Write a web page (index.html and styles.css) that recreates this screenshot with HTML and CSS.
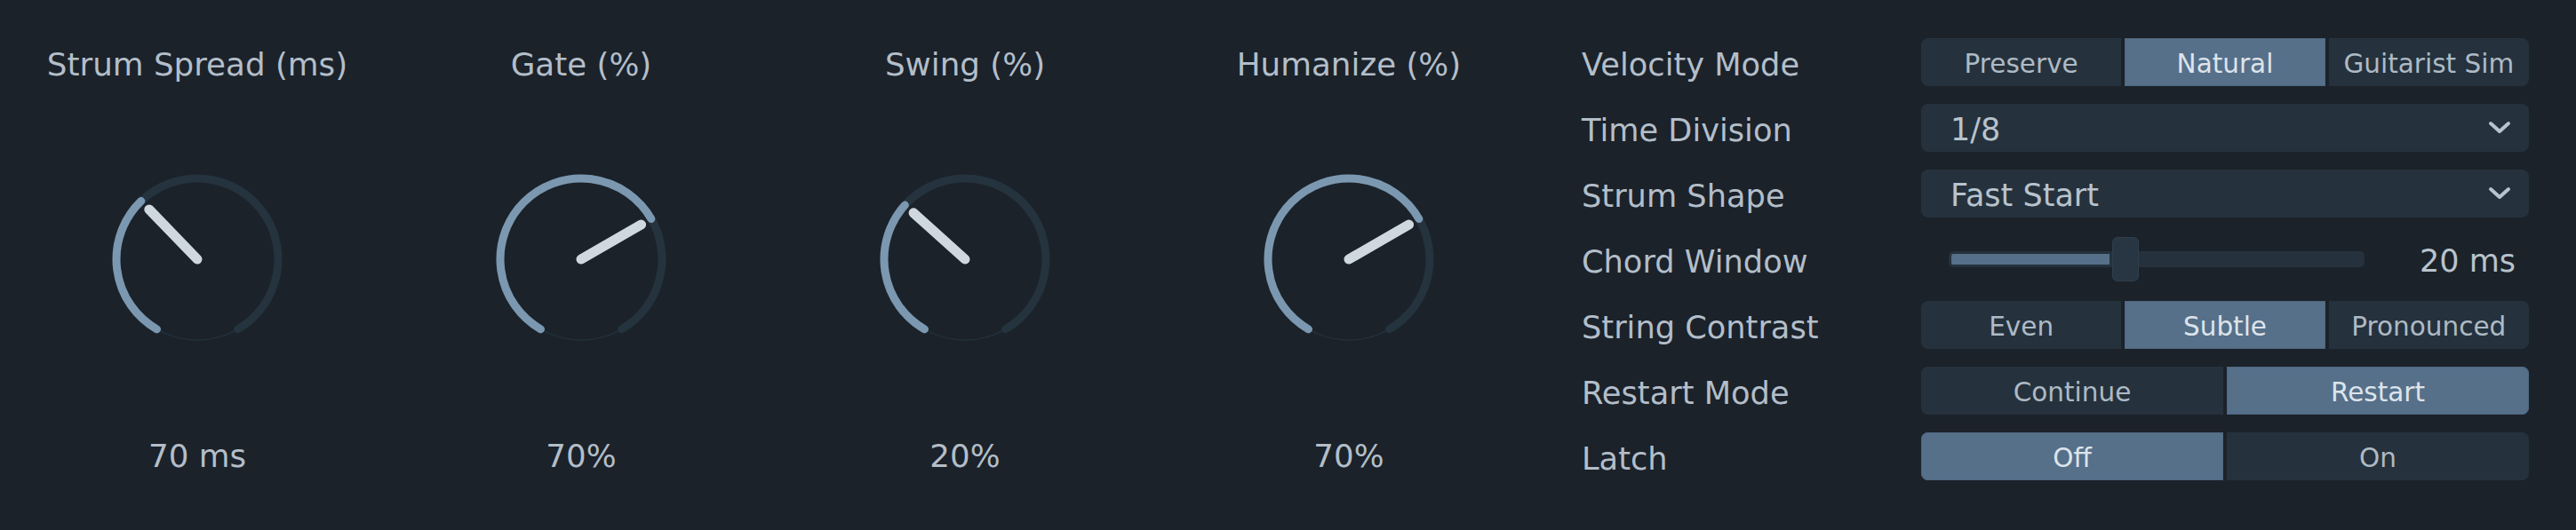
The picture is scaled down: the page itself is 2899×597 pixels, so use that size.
FILE: index.html
```html
<!doctype html>
<html lang="en">

	<head>
		<meta charset="UTF-8" />
		<title>Strum Settings</title>
		<link rel="stylesheet" href="styles.css">
	</head>

	<body>
		<section id="wrap">
			<div class="knobs">
				<div class="knob">
					<p class="knob-label">Strum Spread (ms)</p>
					<svg class="dial" width="200" height="200" viewBox="0 0 200 200">
						<circle class="rim" cx="100" cy="100" r="91" />
						<path class="track" d="M54.5 178.81 A91 91 0 1 1 145.5 178.81" />
						<path class="value" d="M54.5 178.81 A91 91 0 0 1 36.79 34.54" />
						<line class="pointer" x1="100" y1="100" x2="45.82" y2="43.89" />
					</svg>
					<p class="knob-value">70 ms</p>
				</div>
				<div class="knob">
					<p class="knob-label">Gate (%)</p>
					<svg class="dial" width="200" height="200" viewBox="0 0 200 200">
						<circle class="rim" cx="100" cy="100" r="91" />
						<path class="track" d="M54.5 178.81 A91 91 0 1 1 145.5 178.81" />
						<path class="value" d="M54.5 178.81 A91 91 0 1 1 178.81 54.5" />
						<line class="pointer" x1="100" y1="100" x2="167.55" y2="61" />
					</svg>
					<p class="knob-value">70%</p>
				</div>
				<div class="knob">
					<p class="knob-label">Swing (%)</p>
					<svg class="dial" width="200" height="200" viewBox="0 0 200 200">
						<circle class="rim" cx="100" cy="100" r="91" />
						<path class="track" d="M54.5 178.81 A91 91 0 1 1 145.5 178.81" />
						<path class="value" d="M54.5 178.81 A91 91 0 0 1 32.38 39.11" />
						<line class="pointer" x1="100" y1="100" x2="42.04" y2="47.81" />
					</svg>
					<p class="knob-value">20%</p>
				</div>
				<div class="knob">
					<p class="knob-label">Humanize (%)</p>
					<svg class="dial" width="200" height="200" viewBox="0 0 200 200">
						<circle class="rim" cx="100" cy="100" r="91" />
						<path class="track" d="M54.5 178.81 A91 91 0 1 1 145.5 178.81" />
						<path class="value" d="M54.5 178.81 A91 91 0 1 1 178.81 54.5" />
						<line class="pointer" x1="100" y1="100" x2="167.55" y2="61" />
					</svg>
					<p class="knob-value">70%</p>
				</div>
			</div>

			<div class="panel">
				<span class="row-label">Velocity Mode</span>
				<div class="seg">
					<a href="javascript:;">Preserve</a>
					<a href="javascript:;" class="active">Natural</a>
					<a href="javascript:;">Guitarist Sim</a>
				</div>

				<span class="row-label">Time Division</span>
				<div class="select">
					<span>1/8</span>
					<svg class="chevron" width="28" height="16" viewBox="0 0 28 16"><path d="M4 3 L14 12 L24 3" /></svg>
				</div>

				<span class="row-label">Strum Shape</span>
				<div class="select">
					<span>Fast Start</span>
					<svg class="chevron" width="28" height="16" viewBox="0 0 28 16"><path d="M4 3 L14 12 L24 3" /></svg>
				</div>

				<span class="row-label">Chord Window</span>
				<div class="slider">
					<div class="slider-track">
						<div class="slider-fill" style="width: 184px"></div>
						<div class="slider-thumb" style="left: 184px"></div>
					</div>
					<span class="slider-value">20 ms</span>
				</div>

				<span class="row-label">String Contrast</span>
				<div class="seg">
					<a href="javascript:;">Even</a>
					<a href="javascript:;" class="active">Subtle</a>
					<a href="javascript:;">Pronounced</a>
				</div>

				<span class="row-label">Restart Mode</span>
				<div class="seg">
					<a href="javascript:;">Continue</a>
					<a href="javascript:;" class="active">Restart</a>
				</div>

				<span class="row-label">Latch</span>
				<div class="seg">
					<a href="javascript:;" class="active">Off</a>
					<a href="javascript:;">On</a>
				</div>
			</div>
		</section>
	</body>

</html>
```

FILE: styles.css
```css
* {
	margin: 0;
	padding: 0;
	box-sizing: border-box;
}

html,
body {
	background: #1b222a;
	height: 100%;
}

body {
	font-family: "DejaVu Sans", "Liberation Sans", sans-serif;
	color: #b3bec9;
}

#wrap {
	display: flex;
	align-items: flex-start;
	padding: 43px 53px 0 6px;
}

/* knobs */
.knobs {
	display: grid;
	grid-template-columns: repeat(4, 432px);
}

.knob {
	display: flex;
	flex-direction: column;
	align-items: center;
}

.knob-label,
.knob-value {
	font-size: 35.7px;
	line-height: 60px;
	white-space: nowrap;
}

.dial {
	display: block;
	margin: 89px 0 92px;
	overflow: visible;
}

.dial .rim {
	fill: none;
	stroke: #243039;
	stroke-width: 1.5;
}

.dial .track {
	fill: none;
	stroke: #25333e;
	stroke-width: 9;
	stroke-linecap: round;
}

.dial .value {
	fill: none;
	stroke: #7b98b0;
	stroke-width: 9;
	stroke-linecap: round;
}

.dial .pointer {
	stroke: #cfd8df;
	stroke-width: 11;
	stroke-linecap: round;
}

/* right panel */
.panel {
	margin-left: 46px;
	display: grid;
	grid-template-columns: 382px 684px;
	grid-auto-rows: 54px;
	row-gap: 20px;
	align-items: center;
}

.row-label {
	font-size: 35.2px;
	padding-top: 4px;
	white-space: nowrap;
}

.seg {
	display: flex;
	gap: 4px;
	height: 54px;
}

.seg a {
	flex: 1;
	display: flex;
	align-items: center;
	justify-content: center;
	padding-top: 4px;
	background: #25323d;
	color: #aebac5;
	font-size: 29.5px;
	text-decoration: none;
}

.seg a:first-child {
	border-radius: 8px 0 0 8px;
}

.seg a:last-child {
	border-radius: 0 8px 8px 0;
}

.seg a.active {
	background: #56708a;
	color: #dde4ea;
	box-shadow: inset 0 0 0 1px #4f6880;
}

.select {
	display: flex;
	align-items: center;
	justify-content: space-between;
	height: 54px;
	padding: 4px 19px 0 33px;
	background: #25323d;
	border-radius: 8px;
	font-size: 35px;
	color: #b8c3cd;
}

.chevron {
	margin-top: -4px;
}

.chevron path {
	fill: none;
	stroke: #b8c3cd;
	stroke-width: 4;
	stroke-linecap: round;
	stroke-linejoin: round;
}

.slider {
	display: flex;
	align-items: center;
	justify-content: space-between;
	height: 54px;
	padding: 0 15px 0 31px;
}

.slider-track {
	position: relative;
	width: 468px;
	height: 18px;
	background: #25323d;
	border-radius: 5px;
}

.slider-fill {
	height: 100%;
	background: #56708a;
	border: 3px solid #25323d;
	border-radius: 5px 0 0 5px;
}

.slider-thumb {
	position: absolute;
	top: -16px;
	width: 30px;
	height: 50px;
	background: #283643;
	border: 1px solid #2f3e4b;
	border-radius: 6px;
}

.slider-value {
	font-size: 35px;
	padding-top: 4px;
	color: #b8c3cd;
}
```
